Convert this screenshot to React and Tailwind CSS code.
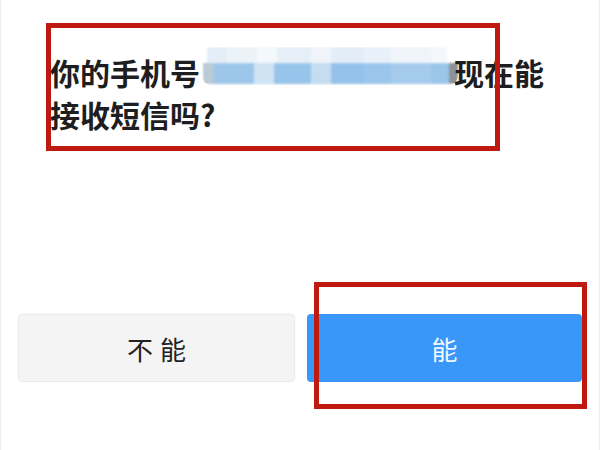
import React from 'react';

const cjk = { fontFamily: '"Noto Sans CJK SC", "Noto Sans", sans-serif' };

// pixelated blur over the phone number
const topCells = [
  [206, 20, '#e4eef7'], [226, 30, '#ebf3f9'], [256, 20, '#f3f8fc'], [276, 34, '#e6eff8'],
  [310, 20, '#eef4fa'], [330, 34, '#e3edf7'], [363, 27, '#e8f1f9'], [390, 40, '#eef4fa'],
  [430, 16, '#f4f8fc'],
];
const bandCells = [
  [202, 11, '#b9cbd7'], [213, 40, '#9dc7ea'], [253, 20, '#cfe3f4'], [273, 37, '#97c4ea'],
  [310, 20, '#c6ddf1'], [330, 33, '#95c2ea'], [363, 27, '#9ac6eb'], [390, 40, '#a4cbec'],
  [430, 18, '#9bc6ea'], [448, 9, '#8c9298'],
];

function Blur() {
  return (
    <svg width="262" height="46" viewBox="199 46 262 46" className="block -mt-[6px] overflow-visible">
      <defs>
        <filter id="soft" x="-5%" y="-20%" width="110%" height="140%">
          <feGaussianBlur stdDeviation="0.8" />
        </filter>
        <clipPath id="pill">
          <rect x="201" y="48" width="256" height="38" rx="9" />
        </clipPath>
      </defs>
      <g clipPath="url(#pill)" filter="url(#soft)">
        <rect x="199" y="84" width="262" height="6" fill="#f4f8fb" />
        {topCells.map(([x, w, c]) => (
          <rect key={'t' + x} x={x} y="48" width={w} height="16" fill={c} />
        ))}
        {bandCells.map(([x, w, c]) => (
          <rect key={'b' + x} x={x} y="64" width={w} height="21" fill={c} />
        ))}
      </g>
    </svg>
  );
}

export default function App() {
  return (
    <div className="relative w-[600px] h-[450px] overflow-hidden bg-white border-l border-r border-[#eeeeee]" style={cjk}>
      <div className="pt-[51px] pl-[49px] pr-[40px] text-[30px] leading-[42px] font-bold text-[#1e1e20]">
        你的手机号
        <span className="inline-block align-top w-[254px] h-[42px]">
          <Blur />
        </span>
        现在能接收短信吗?
      </div>

      <div className="flex gap-[12px] px-[17px] mt-[179px]">
        <button className="flex-1 h-[68px] flex items-center justify-center gap-[7px] rounded-[4px] bg-[#f4f4f4] border border-[#ececec] shadow-[0_-1px_2px_rgba(0,0,0,0.03)] text-[26px] text-[#222222]">
          <span>不</span>
          <span>能</span>
        </button>
        <button className="flex-1 h-[68px] flex items-center justify-center rounded-[4px] bg-[#3897f8] text-[26px] text-[#f2f8ff]">
          能
        </button>
      </div>

      {/* annotation frames */}
      <div className="absolute left-[45px] top-[23px] w-[454px] h-[128px] border-[5px] border-[#bf1a10]" />
      <div className="absolute left-[313px] top-[282px] w-[273px] h-[127px] border-[5px] border-[#bf1a10]" />
    </div>
  );
}
